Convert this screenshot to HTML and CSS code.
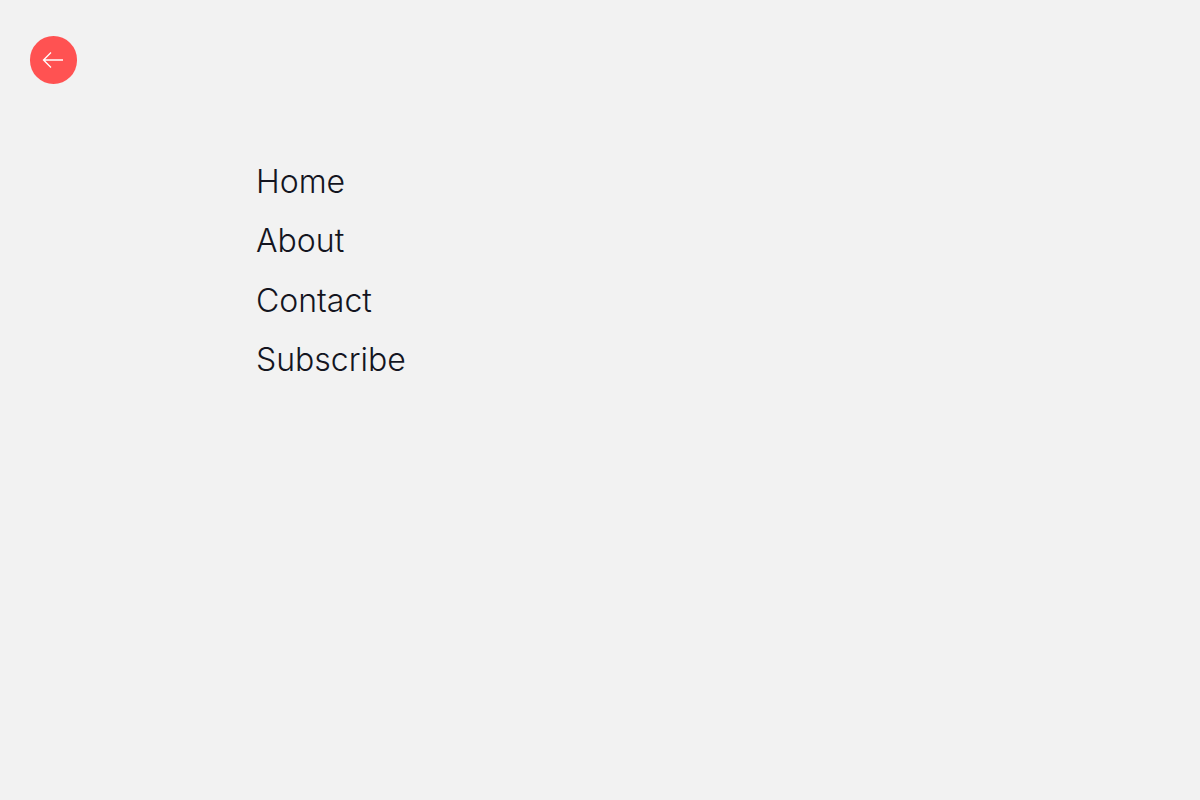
FILE: index.html
```html
<!DOCTYPE html>
<html lang="en">
<head>
<meta charset="utf-8">
<title>Menu</title>
<link rel="stylesheet" href="styles.css">
</head>
<body>
<div class="page">
  <a class="back" href="#" aria-label="Back">
    <svg class="back-icon" width="22" height="18" viewBox="0 0 22 18" fill="none" stroke="#fff" stroke-width="1.3"><path d="M21 9H1.5M9 1.5L1.5 9L9 16.5"/></svg>
  </a>
  <nav class="menu">
    <a href="#">Home</a>
    <a href="#">About</a>
    <a href="#">Contact</a>
    <a href="#">Subscribe</a>
  </nav>
</div>
</body>
</html>
```

FILE: styles.css
```css
* { box-sizing: border-box; }
html, body { margin: 0; height: 100%; }
body { background: #f2f2f2; font-family: "Inter", "Open Sans", sans-serif; }
.page { padding: 36px 0 0 29.5px; min-height: 800px; }
.back { display: flex; width: 47.5px; height: 47.5px; border-radius: 50%; background: #ff5252; align-items: center; justify-content: center; }
.menu { display: flex; flex-direction: column; margin: 68px 0 0 226.5px; }
.menu a { color: #14151f; font-size: 32px; font-weight: 350; line-height: 59.6px; text-decoration: none; }
```
